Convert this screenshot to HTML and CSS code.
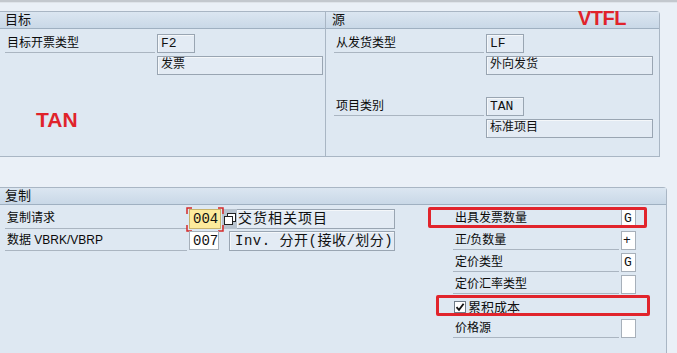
FILE: index.html
```html
<!DOCTYPE html>
<html>
<head>
	<title>复制控制 - 项目</title>
	<link rel="stylesheet" href="styles.css">
</head>
<body>
	<div class="topline"></div>
	<div class="group group-top">
		<div class="panel panel-left">
			<div class="head">目标</div>
			<div class="body">
				<div class="row">
					<span class="label w150">目标开票类型</span>
					<span class="field key w38">F2</span>
				</div>
				<div class="row sub">
					<span class="spacer w150"></span>
					<span class="field w166">发票</span>
				</div>
				<div class="note note-tan">TAN</div>
			</div>
		</div>
		<div class="panel panel-right">
			<div class="head">源 <span class="note note-vtfl">VTFL</span></div>
			<div class="body">
				<div class="row">
					<span class="label w150">从发货类型</span>
					<span class="field key w38">LF</span>
				</div>
				<div class="row sub">
					<span class="spacer w150"></span>
					<span class="field w167">外向发货</span>
				</div>
				<div class="row gap-big">
					<span class="label w150">项目类别</span>
					<span class="field key w38">TAN</span>
				</div>
				<div class="row sub">
					<span class="spacer w150"></span>
					<span class="field w167">标准项目</span>
				</div>
			</div>
		</div>
	</div>

	<div class="group group-bottom">
		<div class="head">复制</div>
		<div class="body cols">
			<div class="col-left">
				<div class="row">
					<span class="label w184">复制请求</span>
					<span class="focus">
						<span class="input yellow w32">004</span>
						<svg class="brackets" width="38" height="25" viewBox="0 0 38 25">
							<path d="M6 1H1V7M32 1H37V7M1 18V24H6M37 18V24H32" fill="none" stroke="#d42a2a" stroke-width="1.5"/>
						</svg>
					</span>
					<span class="f4">
						<svg width="12" height="12" viewBox="0 0 12 12">
							<rect x="3.5" y="0.5" width="8" height="8" fill="#fff" stroke="#222"/>
							<rect x="0.5" y="3.5" width="8" height="8" fill="#fff" stroke="#222"/>
						</svg>
					</span>
					<span class="field big tight w158">交货相关项目</span>
				</div>
				<div class="row">
					<span class="label w184">数据 VBRK/VBRP</span>
					<span class="input w30">007</span>
					<span class="field big w165 ml10">Inv. 分开(接收/划分)</span>
				</div>
			</div>
			<div class="col-right">
				<div class="row">
					<span class="label w168">出具发票数量</span>
					<span class="input small">G</span>
					<span class="mark mark-one"></span>
				</div>
				<div class="row">
					<span class="label w168">正/负数量</span>
					<span class="input small center">+</span>
				</div>
				<div class="row">
					<span class="label w168">定价类型</span>
					<span class="input small">G</span>
				</div>
				<div class="row">
					<span class="label w168">定价汇率类型</span>
					<span class="input small"></span>
				</div>
				<div class="row">
					<span class="check">
						<svg width="12" height="12" viewBox="0 0 12 12">
							<rect x="0.5" y="0.5" width="11" height="11" fill="#fff" stroke="#6f7b88"/>
							<path d="M2.5 6.2L5 8.8L9.6 2.8" fill="none" stroke="#111" stroke-width="1.8"/>
						</svg>
						累积成本
					</span>
					<span class="mark mark-two"></span>
				</div>
				<div class="row">
					<span class="label w168">价格源</span>
					<span class="input small"></span>
				</div>
			</div>
		</div>
	</div>
</body>
</html>
```

FILE: styles.css
```css
body {
	margin: 0;
	padding: 0;
	background: #eaf0f7;
	font-family: "Liberation Sans", "Noto Sans CJK SC", sans-serif;
	font-size: 12px;
	color: #111;
	width: 677px;
	height: 353px;
	overflow: hidden;
}

.topline {
	height: 2px;
	background: #c3c8ce;
	border-bottom: 1px solid #dfe4ea;
	margin-bottom: 8px;
}

.group {
	background: #dee8f2;
	border: 1px solid #a9b6c4;
	border-left: none;
	border-radius: 0 4px 0 0;
}

.group-top {
	width: 659px;
	height: 144px;
	display: flex;
}

.group-bottom {
	width: 666px;
	margin-top: 30px;
	height: 165px;
	border-bottom: none;
}

.panel-left {
	width: 325px;
	border-right: 1px solid #a9b6c4;
}

.panel-right {
	flex: 1;
}

.head {
	height: 16px;
	line-height: 16px;
	padding-left: 5px;
	font-size: 13px;
	background: linear-gradient(#dbe6f1, #c9d8e7);
	border-bottom: 1px solid #9fb0c1;
	position: relative;
}

.panel-right .head {
	padding-left: 6px;
}

.panel-left .body {
	padding: 5px 0 0 5px;
}

.panel-right .body {
	padding: 5px 0 0 8px;
}

.row {
	display: flex;
	align-items: stretch;
	height: 19px;
	margin-bottom: 3px;
	position: relative;
}

.gap-big {
	margin-top: 22px;
}

.label {
	display: block;
	box-sizing: border-box;
	padding-left: 2px;
	line-height: 19px;
	border-bottom: 1px solid #aab5c1;
	margin-right: 2px;
	white-space: nowrap;
	color: #0a0a0a;
}

.spacer {
	display: block;
	margin-right: 2px;
}

.w150 { width: 150px; }
.w184 { width: 182px; }
.w168 { width: 166px; }
.w38 { width: 38px; }
.w30 { width: 30px; }
.w32 { width: 32px; }
.w166 { width: 166px; }
.w167 { width: 167px; }
.w158 { width: 158px; }
.w165 { width: 166px; }
.ml10 { margin-left: 10px; }

.field {
	display: block;
	box-sizing: border-box;
	height: 19px;
	line-height: 17px;
	padding-left: 3px;
	border: 1px solid #99a5b2;
	box-shadow: inset 1px 1px 0 #f4f7fa;
	background: #e3ebf4;
	font-family: "Liberation Mono", "Noto Sans CJK SC", monospace;
	font-size: 12px;
	white-space: nowrap;
	overflow: hidden;
}

.field.key {
	font-size: 13px;
}

.field.big {
	font-size: 14px;
	letter-spacing: 0.5px;
	height: 20px;
	line-height: 18px;
	padding-left: 5px;
}

.field.tight {
	letter-spacing: 1px;
	padding-left: 1px;
	border-left: none;
}

.input {
	display: block;
	box-sizing: border-box;
	height: 19px;
	line-height: 18px;
	padding-left: 3px;
	background: #fff;
	border: 1px solid #a7b0ba;
	font-family: "Liberation Mono", "Noto Sans CJK SC", monospace;
	font-size: 14px;
}

.input.yellow {
	background: #fdeb9c;
	height: 20px;
	border-color: #c9b46b;
}

.input.small {
	width: 15px;
	padding-left: 2px;
	font-size: 13px;
}

.input.center {
	padding-left: 1px;
}

.focus {
	position: relative;
	display: block;
}

.brackets {
	position: absolute;
	left: -3px;
	top: -2px;
}

.f4 {
	display: flex;
	align-items: center;
	justify-content: center;
	width: 15px;
	background: #b8c3ce;
	margin-left: 1px;
}

.note {
	color: #e0232b;
	font-family: "Liberation Sans", sans-serif;
	font-weight: bold;
}

.note-tan {
	font-size: 21px;
	margin: 33px 0 0 31px;
}

.note-vtfl {
	position: absolute;
	left: 252px;
	top: -2px;
	font-size: 20px;
	letter-spacing: -0.5px;
}

.cols {
	display: flex;
	padding-top: 4px;
}

.col-left {
	width: 400px;
	padding-left: 5px;
}

.col-right {
	margin-left: 48px;
}

.col-left .row {
	height: 20px;
	margin-bottom: 2px;
}

.check {
	display: flex;
	align-items: center;
	gap: 2px;
	padding-left: 1px;
	font-size: 13px;
}

.mark {
	position: absolute;
	border: 3px solid #e1242c;
	border-radius: 2px;
}

.mark-one {
	left: -25px;
	top: -2px;
	width: 213px;
	height: 15px;
}

.mark-two {
	left: -17px;
	top: -2px;
	width: 208px;
	height: 15px;
}
```
